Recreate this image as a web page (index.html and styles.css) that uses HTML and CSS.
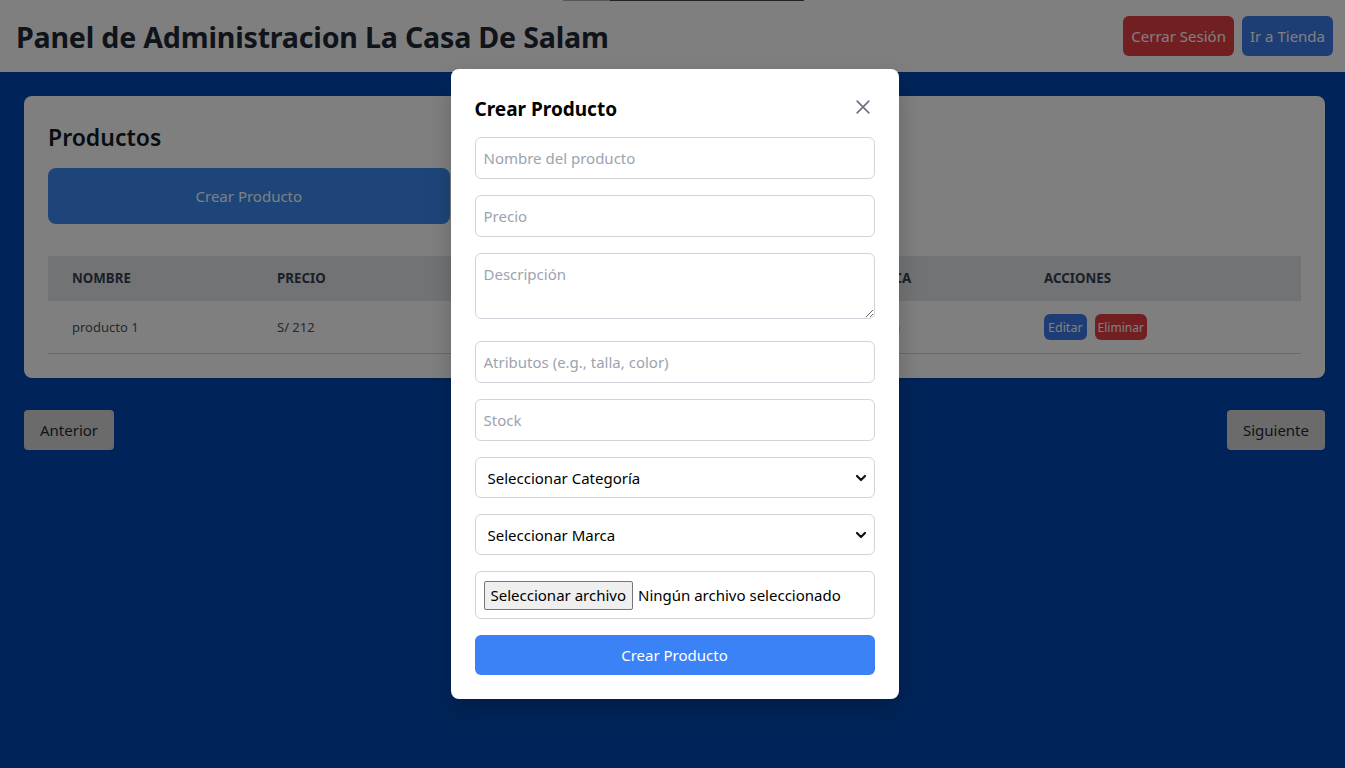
FILE: index.html
```html
<!DOCTYPE html>
<html lang="es">
<head>
<meta charset="utf-8">
<title>Panel de Administracion La Casa De Salam</title>
<link rel="stylesheet" href="styles.css">
</head>
<body>
<div class="page">
  <div class="topline"><span class="topline-a"></span><span class="topline-b"></span></div>
  <header class="header">
    <h1 class="title">Panel de Administracion La Casa De Salam</h1>
    <div class="header-actions">
      <button class="btn btn-red">Cerrar Sesión</button>
      <button class="btn btn-blue">Ir a Tienda</button>
    </div>
  </header>
  <main class="main">
    <section class="card">
      <h2 class="card-title">Productos</h2>
      <div class="card-grid">
        <button class="btn-create">Crear Producto</button>
      </div>
      <table class="table">
        <colgroup>
          <col class="c-nombre"><col class="c-precio"><col class="c-stock"><col class="c-cat"><col class="c-marca"><col class="c-acc">
        </colgroup>
        <thead>
          <tr><th>Nombre</th><th>Precio</th><th>Stock</th><th>Categoría</th><th>Marca</th><th>Acciones</th></tr>
        </thead>
        <tbody>
          <tr>
            <td>producto 1</td><td>S/ 212</td><td>12</td><td>Ropa</td><td>Salam</td>
            <td><div class="row-actions"><button class="sbtn sbtn-blue">Editar</button><button class="sbtn sbtn-red">Eliminar</button></div></td>
          </tr>
        </tbody>
      </table>
    </section>
    <div class="pager">
      <button class="pbtn">Anterior</button>
      <button class="pbtn">Siguiente</button>
    </div>
  </main>

  <div class="overlay">
    <div class="modal">
      <div class="modal-head">
        <h3 class="modal-title">Crear Producto</h3>
        <button class="close" aria-label="Cerrar">
          <svg width="20" height="20" viewBox="0 0 24 24" fill="none" stroke="currentColor" stroke-width="2" stroke-linecap="round"><path d="M5 5L19 19M19 5L5 19"/></svg>
        </button>
      </div>
      <form class="form">
        <input class="field" type="text" placeholder="Nombre del producto">
        <input class="field" type="text" placeholder="Precio">
        <textarea class="field area" placeholder="Descripción"></textarea>
        <input class="field" type="text" placeholder="Atributos (e.g., talla, color)">
        <input class="field" type="text" placeholder="Stock">
        <div class="select-wrap">
          <select class="field select"><option>Seleccionar Categoría</option></select>
          <svg class="chev" width="12" height="8" viewBox="0 0 12 8" fill="none" stroke="#111" stroke-width="2.2" stroke-linecap="round" stroke-linejoin="round"><path d="M2 2l4 4 4-4"/></svg>
        </div>
        <div class="select-wrap">
          <select class="field select"><option>Seleccionar Marca</option></select>
          <svg class="chev" width="12" height="8" viewBox="0 0 12 8" fill="none" stroke="#111" stroke-width="2.2" stroke-linecap="round" stroke-linejoin="round"><path d="M2 2l4 4 4-4"/></svg>
        </div>
        <div class="field file">
          <span class="file-btn">Seleccionar archivo</span>
          <span class="file-name">Ningún archivo seleccionado</span>
        </div>
        <button class="submit" type="button">Crear Producto</button>
      </form>
    </div>
  </div>
</div>
</body>
</html>
```
FILE: styles.css
```css
* { box-sizing: border-box; }
html, body { margin: 0; padding: 0; overflow: hidden; }
body {
  font-family: "Noto Sans", "Open Sans", "DejaVu Sans", sans-serif;
  color: #111827;
  background: #0048b2;
}
button { font-family: inherit; border: 0; cursor: pointer; }

.page {
  position: relative;
  width: 1349px;
  min-height: 768px;
  background: #0048b2;
}
.topline {
  position: absolute;
  top: 0;
  left: 563px;
  display: flex;
  height: 1px;
  z-index: 5;
}
.topline-a { width: 47px; background: #aaaaaa; }
.topline-b { width: 194px; background: #444444; }

.header {
  background: #ffffff;
  display: flex;
  justify-content: space-between;
  align-items: center;
  padding: 16px;
  height: 72px;
}
.title {
  margin: 0;
  font-size: 28.6px;
  line-height: 36px;
  font-weight: 700;
  color: #1f2937;
  letter-spacing: -0.2px;
  padding-top: 2px;
}
.header-actions { display: flex; gap: 8px; }
.btn {
  height: 40px;
  padding: 0 8px;
  border-radius: 6px;
  color: #ffffff;
  font-size: 15px;
}
.btn-red { background: #e53e45; }
.btn-blue { background: #3b7be8; }

.main { padding: 24px 24px 40px 24px; }
.card {
  background: #ffffff;
  border-radius: 8px;
  padding: 24px;
  box-shadow: 0 1px 3px rgba(0,0,0,0.1);
}
.card-title {
  margin: 0 0 16px 0;
  font-size: 23px;
  line-height: 32px;
  font-weight: 600;
  color: #111827;
  padding-top: 1px;
  height: 32px;
}
.card-grid {
  display: grid;
  grid-template-columns: repeat(3, 1fr);
  gap: 24px;
  margin-bottom: 32px;
}
.btn-create {
  height: 56px;
  border-radius: 8px;
  background: #3b8af5;
  color: #ffffff;
  font-size: 15px;
}

.table {
  width: 100%;
  border-collapse: collapse;
  table-layout: fixed;
}
.c-nombre { width: 205px; }
.c-precio { width: 195px; }
.c-stock { width: 195px; }
.c-cat { width: 196px; }
.c-marca { width: 181px; }
.c-acc { width: 281px; }
.table th {
  background: #e5e7eb;
  text-align: left;
  text-transform: uppercase;
  font-size: 13.3px;
  font-weight: 700;
  color: #374151;
  padding: 12px 24px;
  line-height: 21px;
}
.table td {
  font-size: 13px;
  color: #4b5563;
  padding: 13px 24px;
  line-height: 26px;
  border-bottom: 1px solid #d1d5db;
}
.row-actions { display: flex; gap: 8px; }
.sbtn {
  height: 26px;
  padding: 0 4px;
  border-radius: 6px;
  font-size: 12.5px;
  color: #ffffff;
}
.sbtn-blue { background: #3b7be8; }
.sbtn-red { background: #e53e45; padding: 0 3px; font-size: 12px; }

.pager {
  display: flex;
  justify-content: space-between;
  margin-top: 32px;
}
.pbtn {
  height: 40px;
  padding: 0 16px;
  border-radius: 4px;
  background: #d6d6d6;
  color: #1f2937;
  font-size: 15px;
}

.overlay {
  position: absolute;
  top: 0;
  left: 0;
  width: 1349px;
  height: 768px;
  background: rgba(0,0,0,0.5);
  display: flex;
  align-items: center;
  justify-content: center;
  z-index: 10;
}
.modal {
  width: 448px;
  background: #ffffff;
  border-radius: 8px;
  padding: 24px;
  box-shadow: 0 10px 25px rgba(0,0,0,0.2);
}
.modal-head {
  display: flex;
  justify-content: space-between;
  align-items: flex-start;
  margin-bottom: 16px;
  height: 28px;
}
.modal-title {
  margin: 0;
  font-size: 19px;
  line-height: 28px;
  font-weight: 700;
  color: #000000;
  padding-top: 2px;
}
.close {
  background: none;
  padding: 0;
  margin-top: 4px;
  color: #6b7280;
  display: flex;
  margin-right: 2px;
}
.form { display: flex; flex-direction: column; }
.field {
  width: 100%;
  height: 42px;
  border: 1px solid #d1d5db;
  border-radius: 6px;
  padding: 8px;
  font-family: inherit;
  font-size: 15px;
  line-height: 24px;
  color: #111827;
  background: #ffffff;
  margin: 0 0 16px 0;
  outline: none;
}
.field::placeholder { color: #9ca3af; }
.area {
  height: 66px;
  resize: vertical;
  margin-bottom: 22px;
}
.select-wrap { position: relative; }
.select {
  appearance: none;
  -webkit-appearance: none;
  height: 41px;
  padding: 0 12px;
  color: #000000;
}
.chev {
  position: absolute;
  right: 8px;
  top: 17px;
}
.file {
  height: 48px;
  display: flex;
  align-items: center;
  gap: 5px;
  padding: 0 8px;
}
.file-btn {
  background: #efefef;
  border: 1px solid #767676;
  border-radius: 2px;
  padding: 0 6px;
  height: 29px;
  line-height: 27px;
  font-size: 15px;
  color: #000000;
}
.file-name { font-size: 15px; color: #000000; }
.submit {
  height: 40px;
  border-radius: 6px;
  background: #3b82f6;
  color: #ffffff;
  font-size: 15px;
}
```
